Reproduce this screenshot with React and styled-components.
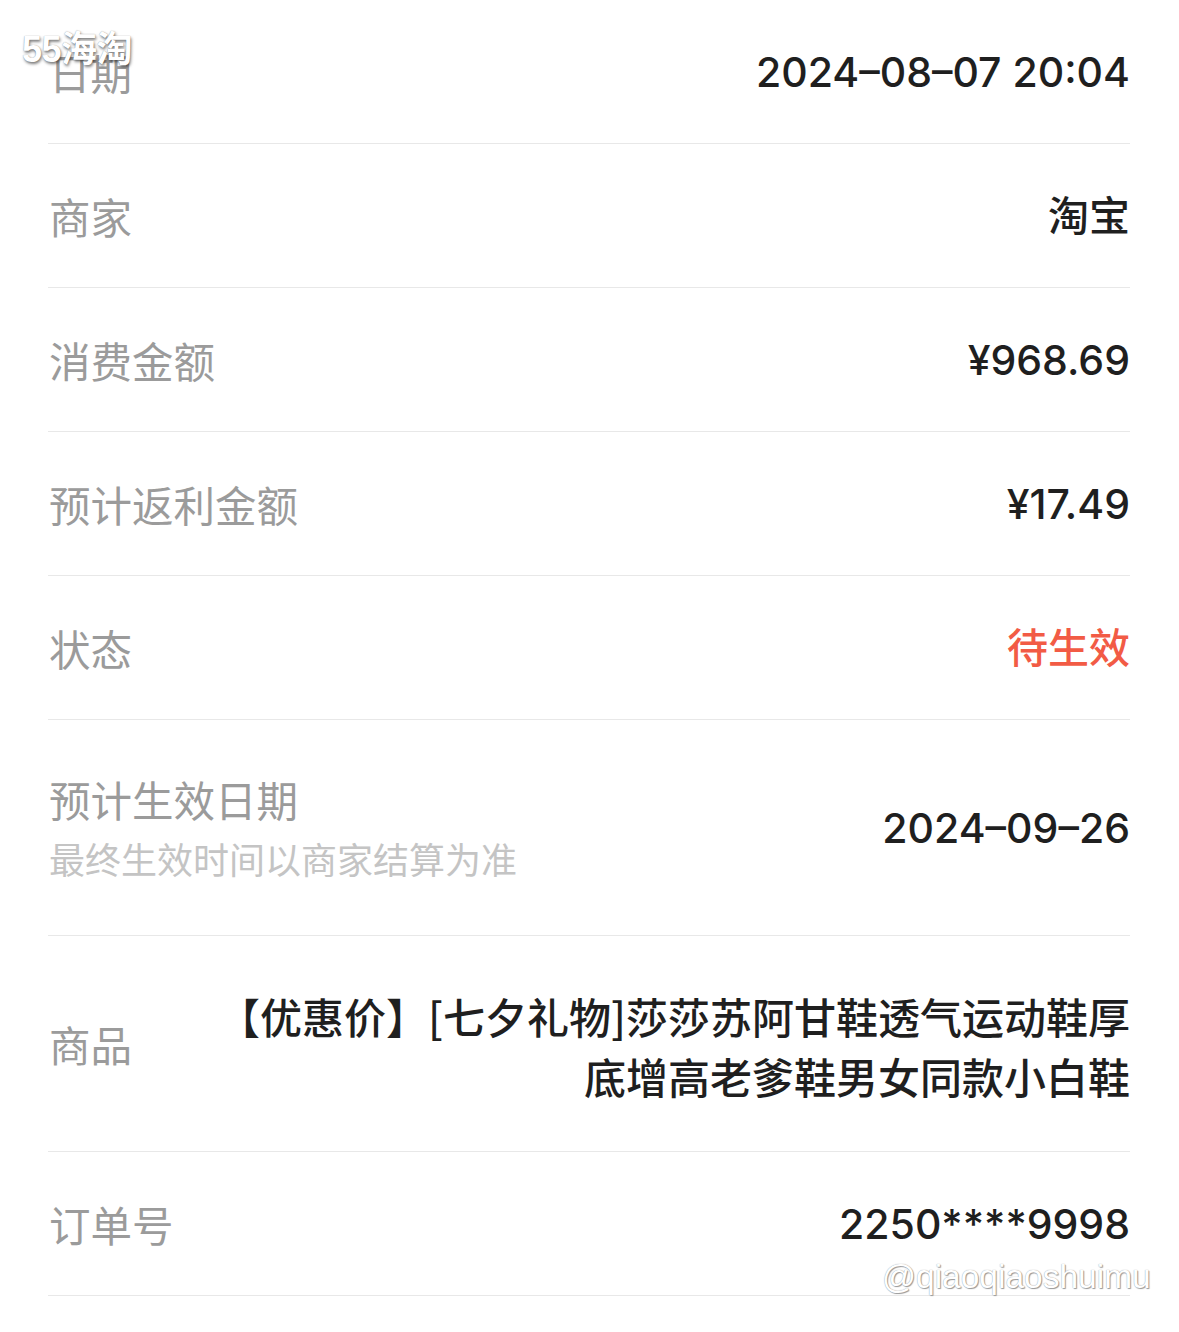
import React from "react";
import styled, { createGlobalStyle } from "styled-components";

const GlobalStyle = createGlobalStyle`
  html, body {
    margin: 0;
    padding: 0;
    background: #fff;
  }
  body {
    font-family: Inter, "Noto Sans CJK SC", sans-serif;
  }
`;

const rows = [
  { label: "日期", value: "2024–08–07 20:04" },
  { label: "商家", value: "淘宝" },
  { label: "消费金额", value: "¥968.69" },
  { label: "预计返利金额", value: "¥17.49" },
  { label: "状态", value: "待生效", status: true },
  {
    label: "预计生效日期",
    sub: "最终生效时间以商家结算为准",
    value: "2024–09–26",
    tall: true,
  },
  {
    label: "商品",
    value: "【优惠价】[七夕礼物]莎莎苏阿甘鞋透气运动鞋厚底增高老爹鞋男女同款小白鞋",
    tall: true,
    long: true,
  },
  { label: "订单号", value: "2250****9998" },
];

const Detail = () => {
  return (
    <>
      <GlobalStyle />
      <Page>
        <List>
          {rows.map((row) => (
            <Row key={row.label} $tall={row.tall}>
              <LabelBox>
                <Label>{row.label}</Label>
                {row.sub && <SubLabel>{row.sub}</SubLabel>}
              </LabelBox>
              {row.long ? (
                <LongValue>{row.value}</LongValue>
              ) : (
                <Value $status={row.status}>{row.value}</Value>
              )}
            </Row>
          ))}
        </List>
        <SiteMark>55海淘</SiteMark>
        <UserMark>@qiaoqiaoshuimu</UserMark>
      </Page>
    </>
  );
};

const Page = styled.div`
  position: relative;
  width: 1179px;
  height: 1332px;
  background: #fff;
  overflow: hidden;
`;

const List = styled.div`
  display: flex;
  flex-direction: column;
  padding: 0 49px 0 48px;
`;

const Row = styled.div`
  display: flex;
  justify-content: space-between;
  align-items: center;
  gap: 40px;
  height: ${(p) => (p.$tall ? "215px" : "143px")};
  border-bottom: 1px solid #e8e8e8;
`;

const LabelBox = styled.div`
  display: flex;
  flex-direction: column;
  gap: 12px;
  flex-shrink: 0;
`;

const Label = styled.div`
  font-family: "Noto Sans CJK SC", sans-serif;
  font-size: 41.5px;
  line-height: 48px;
  color: #9b9b9b;
  padding-left: 1px;
`;

const SubLabel = styled.div`
  font-family: "Noto Sans CJK SC", sans-serif;
  font-size: 36px;
  line-height: 46px;
  color: #c4c4c4;
  padding-left: 1px;
`;

const Value = styled.div`
  font-family: Inter, "Noto Sans CJK SC", sans-serif;
  font-size: 41px;
  line-height: 50px;
  font-weight: 500;
  color: ${(p) => (p.$status ? "#f25b45" : "#1f1f1f")};
  text-align: right;
  white-space: nowrap;
`;

const LongValue = styled.div`
  font-family: "Noto Sans CJK SC", sans-serif;
  font-size: 42px;
  line-height: 60px;
  font-weight: 500;
  color: #1f1f1f;
  text-align: right;
  max-width: 920px;
  padding-top: 4px;
`;

const SiteMark = styled.div`
  position: absolute;
  left: 22px;
  top: 20px;
  font-family: "Liberation Sans", "Noto Sans CJK SC", sans-serif;
  font-size: 36px;
  font-weight: 700;
  letter-spacing: -0.5px;
  color: #fff;
  text-shadow: 1px 2px 3px rgba(0, 0, 0, 0.5), 0 0 1px rgba(0, 0, 0, 0.4);
`;

const UserMark = styled.div`
  position: absolute;
  left: 882px;
  top: 1258px;
  font-family: "Liberation Sans", sans-serif;
  font-size: 33.5px;
  color: #fff;
  text-shadow: 0 0 1px #8a8a8a, 1px 1px 1px #9a9a9a;
`;

export default Detail;
